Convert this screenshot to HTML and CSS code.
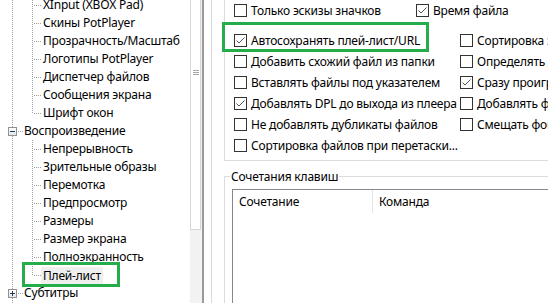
FILE: index.html
```html
<!DOCTYPE html>
<html lang="ru">
<head>
    <meta charset="UTF-8">
    <title>PotPlayer — Плей-лист</title>
    <link rel="stylesheet" href="styles.css">
</head>
<body>
    <div class="window">
        <div class="tree-pane">
            <ul class="tree">
                <li class="leaf">XInput (XBOX Pad)</li>
                <li class="leaf">Скины PotPlayer</li>
                <li class="leaf">Прозрачность/Масштаб</li>
                <li class="leaf">Логотипы PotPlayer</li>
                <li class="leaf">Диспетчер файлов</li>
                <li class="leaf">Сообщения экрана</li>
                <li class="leaf last">Шрифт окон</li>
                <li class="node open"><span class="toggle"></span>Воспроизведение</li>
                <li class="leaf">Непрерывность</li>
                <li class="leaf">Зрительные образы</li>
                <li class="leaf">Перемотка</li>
                <li class="leaf">Предпросмотр</li>
                <li class="leaf">Размеры</li>
                <li class="leaf">Размер экрана</li>
                <li class="leaf">Полноэкранность</li>
                <li class="leaf last selected"><span class="label">Плей-лист</span><span class="mark tree-mark"></span></li>
                <li class="node"><span class="toggle"></span>Субтитры</li>
            </ul>
            <div class="scrollbar">
                <div class="thumb"><span class="grip"></span></div>
            </div>
        </div>

        <div class="settings">
            <div class="group options-group">
                <div class="top-row">
                    <label class="check first"><span class="box"></span>Только эскизы значков</label>
                    <label class="check"><span class="box"><svg viewBox="0 0 11 11"><polyline points="1.5,5.5 4,8 9.5,2.5"/></svg></span>Время файла</label>
                </div>
                <div class="options">
                    <label class="check marked"><span class="box"><svg viewBox="0 0 11 11"><polyline points="1.5,5.5 4,8 9.5,2.5"/></svg></span>Автосохранять плей-лист/URL<span class="mark option-mark"></span></label>
                    <label class="check"><span class="box"></span>Сортировка значков по имени</label>
                    <label class="check"><span class="box"></span>Добавить схожий файл из папки</label>
                    <label class="check"><span class="box"></span>Определять длительность</label>
                    <label class="check"><span class="box"></span>Вставлять файлы под указателем</label>
                    <label class="check"><span class="box"><svg viewBox="0 0 11 11"><polyline points="1.5,5.5 4,8 9.5,2.5"/></svg></span>Сразу проигрывать</label>
                    <label class="check"><span class="box"><svg viewBox="0 0 11 11"><polyline points="1.5,5.5 4,8 9.5,2.5"/></svg></span>Добавлять DPL до выхода из плеера</label>
                    <label class="check"><span class="box"></span>Добавлять файлы</label>
                    <label class="check"><span class="box"></span>Не добавлять дубликаты файлов</label>
                    <label class="check"><span class="box"></span>Смещать фокус</label>
                    <label class="check wide"><span class="box"></span>Сортировка файлов при перетаски...</label>
                </div>
            </div>

            <div class="group keys-group">
                <div class="legend">Сочетания клавиш</div>
                <div class="listview">
                    <div class="list-header">
                        <div class="col col-keys">Сочетание</div>
                        <div class="col">Команда</div>
                    </div>
                </div>
            </div>
        </div>
    </div>
</body>
</html>
```

FILE: styles.css
```css
body {
    margin: 0;
    width: 548px;
    height: 303px;
    overflow: hidden;
    background: #fff;
    font-family: "Noto Sans", "Liberation Sans", sans-serif;
    font-size: 12px;
    letter-spacing: -0.2px;
    color: #000;
}

.window {
    display: flex;
    height: 303px;
}

/* ---- tree ---- */
.tree-pane {
    display: flex;
    width: 202px;
    border-right: 2px solid #9a9a9a;
    overflow: hidden;
}

.tree {
    list-style: none;
    margin: -4px 0 0;
    padding: 0;
    width: 190px;
    background: repeating-linear-gradient(to bottom, #a0a0a0 0 1px, transparent 1px 2px) 12px 0 / 1px 100% no-repeat;
}

.tree li {
    position: relative;
    height: 18px;
    line-height: 18px;
    white-space: nowrap;
}

.leaf {
    padding-left: 43px;
}

.node {
    padding-left: 24px;
}

.leaf::before {
    content: '';
    position: absolute;
    left: 32px;
    top: 0;
    width: 1px;
    height: 18px;
    background: repeating-linear-gradient(to bottom, #a0a0a0 0 1px, transparent 1px 2px);
}

.leaf.last::before {
    height: 9px;
}

.leaf::after,
.node::after {
    content: '';
    position: absolute;
    left: 34px;
    top: 9px;
    width: 7px;
    height: 1px;
    background: repeating-linear-gradient(to right, #a0a0a0 0 1px, transparent 1px 2px);
}

.node::after {
    left: 18px;
    width: 5px;
}

.toggle {
    position: absolute;
    left: 8px;
    top: 5px;
    width: 9px;
    height: 9px;
    box-sizing: border-box;
    border: 1px solid #919191;
    background: linear-gradient(#fff, #e6e6e6);
    z-index: 1;
}

.toggle::before {
    content: '';
    position: absolute;
    left: 1px;
    top: 3px;
    width: 5px;
    height: 1px;
    background: #1e395b;
}

.node:not(.open) .toggle::after {
    content: '';
    position: absolute;
    left: 3px;
    top: 1px;
    width: 1px;
    height: 5px;
    background: #1e395b;
}

.selected .label {
    display: inline-block;
    vertical-align: top;
    margin: 1px 0 0 -2px;
    padding: 0 2px;
    line-height: 17px;
    background: #efefef;
}

.mark {
    position: absolute;
    box-sizing: border-box;
    border: 3px solid #24ad4a;
    pointer-events: none;
}

.tree-mark {
    left: 22px;
    top: -4px;
    width: 98px;
    height: 25px;
}

.scrollbar {
    width: 12px;
    background: #f2f2f2;
}

.thumb {
    width: 11px;
    height: 232px;
    margin-top: -2px;
    box-sizing: border-box;
    border: 1px solid #d6d6d6;
    background: #fff;
    padding-top: 71px;
}

.grip {
    display: block;
    width: 6px;
    height: 5px;
    margin-left: 2px;
    background: repeating-linear-gradient(to bottom, #a8a8a8 0 1px, transparent 1px 2px);
}

/* ---- settings ---- */
.settings {
    flex: 1;
    min-width: 0;
    margin-left: 7px;
    border-left: 1px solid #dadada;
    padding-left: 12px;
    display: flex;
    flex-direction: column;
    overflow: hidden;
}

.group {
    width: 400px;
    border: 1px solid #dcdcdc;
    flex-shrink: 0;
}

.options-group {
    margin-top: -15px;
    padding: 14px 0 4px 9px;
}

.top-row {
    display: flex;
    margin-bottom: 9px;
}

.top-row .first {
    width: 182px;
}

.options {
    display: grid;
    grid-template-columns: 226px auto;
}

.check {
    position: relative;
    display: flex;
    align-items: center;
    height: 21px;
    white-space: nowrap;
}

.check.wide {
    grid-column: span 2;
}

.box {
    width: 13px;
    height: 13px;
    box-sizing: border-box;
    border: 1px solid #333;
    background: #fff;
    margin-right: 4px;
    flex-shrink: 0;
}

.box svg {
    display: block;
    width: 11px;
    height: 11px;
    fill: none;
    stroke: #555;
    stroke-width: 1;
}

.option-mark {
    left: -12px;
    top: -8px;
    width: 207px;
    height: 30px;
}

.keys-group {
    margin-top: 15px;
    height: 200px;
}

.legend {
    width: fit-content;
    margin: -8px 0 0 5px;
    padding: 0 1px;
    line-height: 16px;
    background: #fff;
}

.listview {
    margin: 4px 0 0 7px;
    height: 200px;
    border: 1px solid #828790;
}

.list-header {
    display: flex;
    height: 23px;
    line-height: 23px;
}

.col {
    padding-left: 6px;
}

.col-keys {
    width: 140px;
    box-sizing: border-box;
    border-right: 1px solid #e5e5e5;
}
```
